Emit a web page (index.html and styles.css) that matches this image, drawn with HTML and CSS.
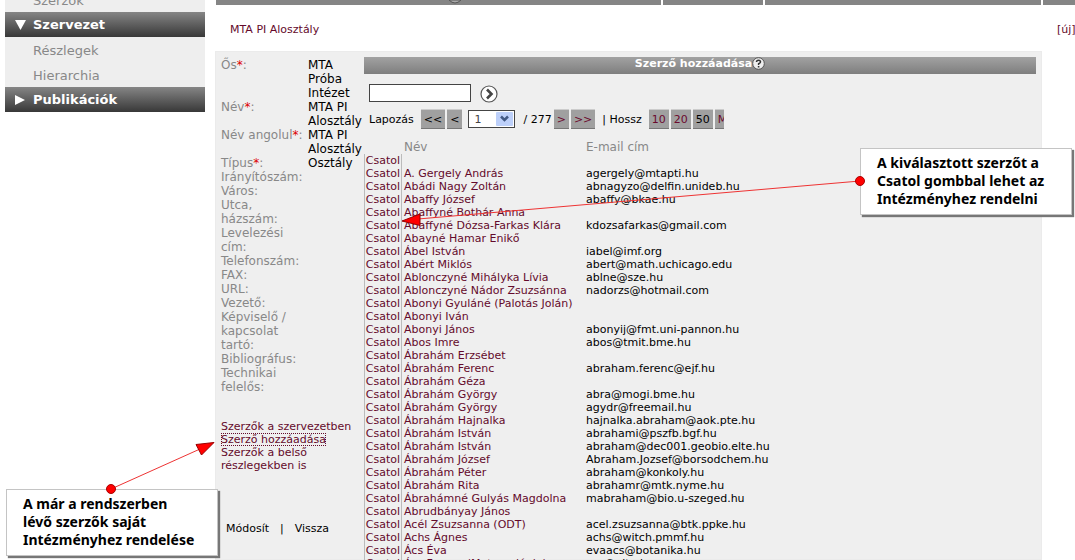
FILE: index.html
```
<!DOCTYPE html>
<html lang="hu">
<head>
<meta charset="utf-8">
<title>MTA PI Alosztály</title>
<link rel="stylesheet" href="styles.css">
</head>
<body>
<div class="page">
  <nav class="sidebar" aria-label="Menü">
    <div class="menu-top"><a class="menu-item" href="#">Szerzők</a></div>
    <button class="menu-head" type="button"><svg width="12" height="12" viewBox="0 0 12 12" aria-hidden="true"><path d="M1 1h11L6.500 11z" fill="#fff"/></svg>Szervezet</button>
    <a class="menu-item" href="#">Részlegek</a>
    <a class="menu-item" href="#">Hierarchia</a>
    <button class="menu-head" type="button"><svg width="12" height="12" viewBox="0 0 12 12" aria-hidden="true"><path d="M1 1v10L11 6z" fill="#fff"/></svg>Publikációk</button>
  </nav>
  <main class="main">
    <div class="tabs"><span class="tab tab-help"><svg width="12" height="4" viewBox="0 0 12 4" aria-hidden="true"><path d="M0 0Q6 6 12 0z" fill="#aaa" stroke="#555"/></svg></span><span class="tab"></span><span class="tab"></span><span class="tab"></span></div>
    <div class="crumbs"><a href="#">MTA PI Alosztály</a><a href="#">[új]</a></div>
    <section class="panel">
      <div class="details">
        <dl class="fields">
          <dt>Ős<b>*</b>:</dt><dd>MTA<br>Próba<br>Intézet</dd>
          <dt>Név<b>*</b>:</dt><dd>MTA PI<br>Alosztály</dd>
          <dt>Név angolul<b>*</b>:</dt><dd>MTA PI<br>Alosztály</dd>
          <dt>Típus<b>*</b>:</dt><dd>Osztály</dd>
          <dt>Irányítószám:</dt><dd></dd>
          <dt>Város:</dt><dd></dd>
          <dt>Utca,<br>házszám:</dt><dd></dd>
          <dt>Levelezési<br>cím:</dt><dd></dd>
          <dt>Telefonszám:</dt><dd></dd>
          <dt>FAX:</dt><dd></dd>
          <dt>URL:</dt><dd></dd>
          <dt>Vezető:</dt><dd></dd>
          <dt>Képviselő /<br>kapcsolat<br>tartó:</dt><dd></dd>
          <dt>Bibliográfus:</dt><dd></dd>
          <dt>Technikai<br>felelős:</dt><dd></dd>
        </dl>
        <div class="links">
          <a href="#">Szerzők a szervezetben</a>
          <a class="current" href="#">Szerző hozzáadása</a>
          <a href="#">Szerzők a belső<br>részlegekben is</a>
        </div>
        <div class="actions"><button type="button">Módosít</button><span>|</span><button type="button">Vissza</button></div>
      </div>
      <div class="authors">
        <h2 class="bar">Szerző hozzáadása<svg width="13" height="13" viewBox="0 0 13 13" aria-hidden="true"><circle cx="6.500" cy="6.500" r="5.800" fill="#eee" stroke="#555"/><path d="M4.500 5Q4.500 3.200 6.500 3.200T8.500 5Q8.500 6 6.600 6.800V8" fill="none" stroke="#333" stroke-width="1.500"/><path d="M5.800 9h1.600v1.500H5.800z" fill="#333"/></svg></h2>
        <form class="search">
          <input type="text" aria-label="Keresés">
          <button type="submit" aria-label="Keresés"><svg width="18" height="18" viewBox="0 0 18 18" aria-hidden="true"><circle cx="9" cy="9" r="8" fill="#fff" stroke="#555" stroke-width="1.200"/><path d="M7 4.500l4.500 4.500L7 13.500" fill="none" stroke="#444" stroke-width="2.600"/></svg></button>
        </form>
        <div class="pager">
          <label for="page">Lapozás</label>
          <span class="group first"><button type="button" disabled>&lt;&lt;</button><button type="button" disabled>&lt;</button></span>
          <span class="pick"><select id="page"><option>1</option></select><svg width="17" height="14" viewBox="0 0 17 14" aria-hidden="true"><rect width="17" height="14" rx="1" fill="#bdd0fa"/><path d="M5 4.500l3.500 3.500L12 4.500" fill="none" stroke="#435a85" stroke-width="2.500"/></svg></span>
          <span class="total">/ 277</span>
          <span class="group"><button type="button">&gt;</button><button type="button">&gt;&gt;</button></span>
          <span class="length">| Hossz</span>
          <span class="group sizes"><button type="button">10</button><button type="button">20</button><button type="button" disabled>50</button><button type="button">M</button></span>
        </div>
        <table class="list">
          <thead><tr><th></th><th>Név</th><th>E-mail cím</th></tr></thead>
          <tbody>
            <tr><td><button type="button">Csatol</button></td><td></td><td></td></tr>
            <tr><td><button type="button">Csatol</button></td><td><a href="#">A. Gergely András</a></td><td>agergely@mtapti.hu</td></tr>
            <tr><td><button type="button">Csatol</button></td><td><a href="#">Abádi Nagy Zoltán</a></td><td>abnagyzo@delfin.unideb.hu</td></tr>
            <tr><td><button type="button">Csatol</button></td><td><a href="#">Abaffy József</a></td><td>abaffy@bkae.hu</td></tr>
            <tr><td><button type="button">Csatol</button></td><td><a href="#">Abaffyné Bothár Anna</a></td><td></td></tr>
            <tr><td><button type="button">Csatol</button></td><td><a href="#">Abaffyné Dózsa-Farkas Klára</a></td><td>kdozsafarkas@gmail.com</td></tr>
            <tr><td><button type="button">Csatol</button></td><td><a href="#">Abayné Hamar Enikő</a></td><td></td></tr>
            <tr><td><button type="button">Csatol</button></td><td><a href="#">Ábel István</a></td><td>iabel@imf.org</td></tr>
            <tr><td><button type="button">Csatol</button></td><td><a href="#">Abért Miklós</a></td><td>abert@math.uchicago.edu</td></tr>
            <tr><td><button type="button">Csatol</button></td><td><a href="#">Ablonczyné Mihályka Lívia</a></td><td>ablne@sze.hu</td></tr>
            <tr><td><button type="button">Csatol</button></td><td><a href="#">Ablonczyné Nádor Zsuzsánna</a></td><td>nadorzs@hotmail.com</td></tr>
            <tr><td><button type="button">Csatol</button></td><td><a href="#">Abonyi Gyuláné (Palotás Jolán)</a></td><td></td></tr>
            <tr><td><button type="button">Csatol</button></td><td><a href="#">Abonyi Iván</a></td><td></td></tr>
            <tr><td><button type="button">Csatol</button></td><td><a href="#">Abonyi János</a></td><td>abonyij@fmt.uni-pannon.hu</td></tr>
            <tr><td><button type="button">Csatol</button></td><td><a href="#">Abos Imre</a></td><td>abos@tmit.bme.hu</td></tr>
            <tr><td><button type="button">Csatol</button></td><td><a href="#">Ábrahám Erzsébet</a></td><td></td></tr>
            <tr><td><button type="button">Csatol</button></td><td><a href="#">Ábrahám Ferenc</a></td><td>abraham.ferenc@ejf.hu</td></tr>
            <tr><td><button type="button">Csatol</button></td><td><a href="#">Ábrahám Géza</a></td><td></td></tr>
            <tr><td><button type="button">Csatol</button></td><td><a href="#">Ábrahám György</a></td><td>abra@mogi.bme.hu</td></tr>
            <tr><td><button type="button">Csatol</button></td><td><a href="#">Ábrahám György</a></td><td>agydr@freemail.hu</td></tr>
            <tr><td><button type="button">Csatol</button></td><td><a href="#">Ábrahám Hajnalka</a></td><td>hajnalka.abraham@aok.pte.hu</td></tr>
            <tr><td><button type="button">Csatol</button></td><td><a href="#">Ábrahám István</a></td><td>abrahami@pszfb.bgf.hu</td></tr>
            <tr><td><button type="button">Csatol</button></td><td><a href="#">Ábrahám István</a></td><td>abraham@dec001.geobio.elte.hu</td></tr>
            <tr><td><button type="button">Csatol</button></td><td><a href="#">Ábrahám József</a></td><td>Abraham.Jozsef@borsodchem.hu</td></tr>
            <tr><td><button type="button">Csatol</button></td><td><a href="#">Ábrahám Péter</a></td><td>abraham@konkoly.hu</td></tr>
            <tr><td><button type="button">Csatol</button></td><td><a href="#">Ábrahám Rita</a></td><td>abrahamr@mtk.nyme.hu</td></tr>
            <tr><td><button type="button">Csatol</button></td><td><a href="#">Ábrahámné Gulyás Magdolna</a></td><td>mabraham@bio.u-szeged.hu</td></tr>
            <tr><td><button type="button">Csatol</button></td><td><a href="#">Abrudbányay János</a></td><td></td></tr>
            <tr><td><button type="button">Csatol</button></td><td><a href="#">Acél Zsuzsanna (ODT)</a></td><td>acel.zsuzsanna@btk.ppke.hu</td></tr>
            <tr><td><button type="button">Csatol</button></td><td><a href="#">Achs Ágnes</a></td><td>achs@witch.pmmf.hu</td></tr>
            <tr><td><button type="button">Csatol</button></td><td><a href="#">Ács Éva</a></td><td>evaacs@botanika.hu</td></tr>
            <tr><td><button type="button">Csatol</button></td><td><a href="#">Ács Ferenc (Meteorológia)</a></td><td>acs@elte.hu</td></tr>
          </tbody>
        </table>
      </div>
    </section>
  </main>
  <aside class="note note-attach">A kiválasztott szerzőt a<br>Csatol gombbal lehet az<br>Intézményhez rendelni</aside>
  <aside class="note note-add">A már a rendszerben<br>lévő szerzők saját<br>Intézményhez rendelése</aside>
  <svg class="arrows" width="1075" height="560" viewBox="0 0 1075 560" aria-hidden="true">
    <g stroke="#e33" fill="#f00"><path d="M860 181L418 219M111 489L200 449"/>
    <path d="M402 221L420 214V225.500zM214 442.500L196 444.500L201.500 455z" stroke="#900"/>
    <circle cx="860" cy="181" r="4.500" stroke="#a00"/><circle cx="111" cy="489" r="4.500" stroke="#a00"/></g>
  </svg>
</div>
</body>
</html>
```

FILE: styles.css
```
* { box-sizing: border-box; }
html, body { margin: 0; height: 100%; overflow: hidden; }
body { background: #fff; color: #000; font: 11px/13px "DejaVu Sans", sans-serif; }
a { color: #640a2b; text-decoration: none; }
button { margin: 0; padding: 0; border: 0; background: none; font: inherit; color: inherit; cursor: pointer; }

.page { position: relative; display: flex; gap: 10px; height: 100vh; padding-left: 5px; overflow: hidden; }

.sidebar { flex: 0 0 200px; font-size: 13px; }
.menu-top { display: flex; flex-direction: column; justify-content: flex-end; height: 12px; overflow: hidden; }
.menu-item { display: block; flex: none; height: 25px; padding-left: 28px; background: #eee; color: #888; line-height: 27px; }
.menu-head { display: flex; align-items: center; gap: 7px; width: 100%; height: 25px; padding-left: 9px; background: linear-gradient(#858585, #383838); color: #fff; font-weight: bold; }

.main { flex: 1; min-width: 0; display: flex; flex-direction: column; }
.tabs { display: grid; grid-template-columns: 445fr 100fr 276fr 32fr; gap: 2px; height: 5px; padding-left: 1px; }
.tab { background: #858585; }
.tab-help { display: flex; justify-content: center; padding-left: 32px; }
.crumbs { display: flex; justify-content: space-between; height: 46px; padding: 18px 0 0 15px; white-space: nowrap; }
.crumbs a:last-child { width: 18px; overflow: hidden; }

.panel { flex: 1; display: flex; margin-right: 33px; padding: 5px; border: 1px solid #ebebeb; background: #efefef; min-height: 0; }
.details { flex: 0 0 143px; padding-top: 1px; font-size: 12px; line-height: 14px; white-space: nowrap; }
.fields { display: grid; grid-template-columns: 87px 1fr; margin: 0 0 26px; }
.fields dt { color: #888; }
.fields dd { margin: 0; }
.fields b { color: #d00; font-weight: normal; }
.links { display: flex; flex-direction: column; align-items: flex-start; font-size: 11px; line-height: 13px; }
.links .current { outline: 1px dotted #640a2b; outline-offset: -1px; }
.actions { display: flex; gap: 11px; padding: 50px 0 0 5px; font-size: 11px; line-height: 13px; }

.authors { flex: 1; min-width: 0; }
.bar { display: flex; justify-content: center; align-items: flex-start; height: 17px; margin: 0; background: linear-gradient(#a2a2a2, #7e7e7e); color: #fff; font-size: 11px; line-height: 13px; }
.search { display: flex; gap: 9px; padding: 10px 5px 0; }
.search input { width: 102px; height: 18px; border: 1px solid #444; background: #fff; font: inherit; }
.search button { height: 18px; margin-top: 1px; }
.pager { display: flex; align-items: center; width: 360px; height: 20px; margin-top: 6px; padding-left: 5px; overflow: hidden; white-space: nowrap; }
.group { display: flex; flex: none; gap: 2px; }
.group button { height: 20px; padding: 0 3px; border-top: 1px solid #ccc; border-bottom: 1px solid #777; background: #a0a0a0; color: #6b0a2e; }
.group button:disabled { color: #000; }
.first { margin: 0 6px 0 7px; }
.pick { position: relative; }
.pick select { display: block; appearance: none; width: 47px; height: 18px; padding: 0 5px; border: 1px solid #444; border-radius: 0; background: #fff; color: #444; font: inherit; }
.pick svg { position: absolute; top: 2px; right: 2px; pointer-events: none; }
.total { margin: 0 2px 0 8px; }
.length { margin: 0 7px; }
.list { border-collapse: collapse; table-layout: fixed; width: 100%; white-space: nowrap; }
.list th { height: 25px; padding: 11px 0 0 2px; color: #888; font-size: 12px; font-weight: normal; line-height: 14px; text-align: left; }
.list th:nth-child(1) { width: 38px; }
.list th:nth-child(2) { width: 182px; }
.list td { height: 13px; padding: 0 0 0 2px; }
.list td:first-child { padding: 0; }
.list button { display: block; width: 100%; height: 13px; overflow: hidden; border: solid #bbb; border-width: 0 1px; color: #640a2b; }

.note { position: absolute; width: 212px; padding: 5px 16px 6px; border: 1px solid #c4c4c4; background: #fff; box-shadow: 2px 2px 1px #777; font: bold 14px/18px "Noto Sans", sans-serif; white-space: nowrap; }
.note-attach { top: 148px; left: 860px; }
.note-add { top: 489px; left: 6px; }
.arrows { position: absolute; top: 0; left: 0; pointer-events: none; }
```
